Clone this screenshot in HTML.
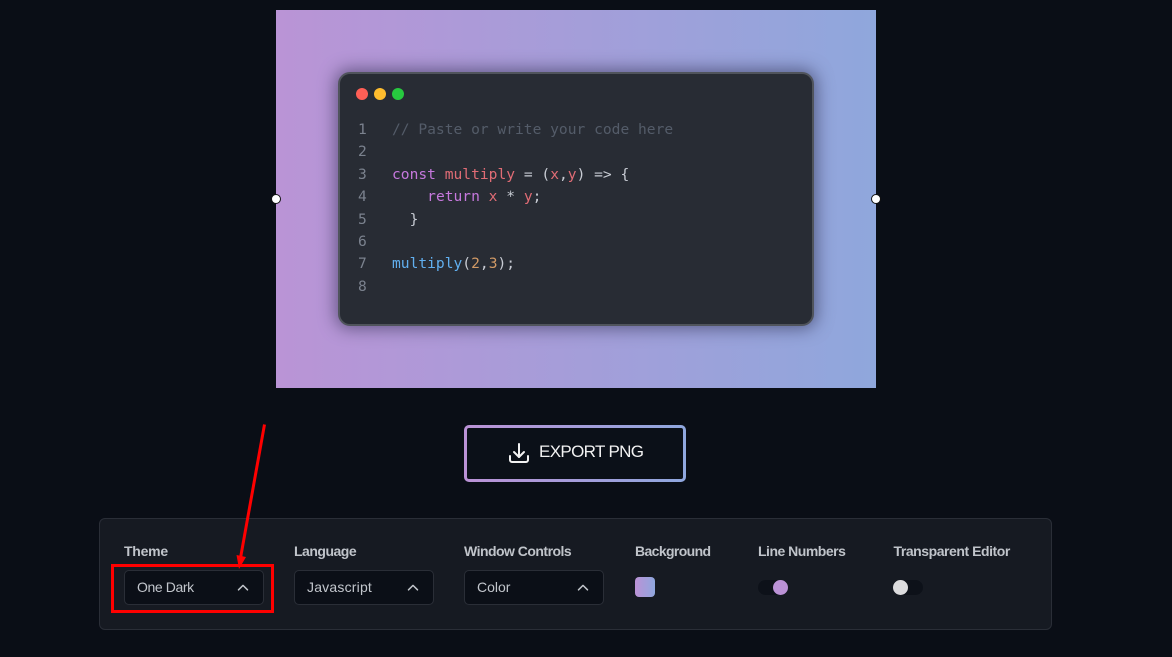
<!DOCTYPE html>
<html><head><meta charset="utf-8"><style>
html,body{margin:0;padding:0;background:#0a0e16;width:1172px;height:657px;overflow:hidden}
body{position:relative;font-family:"Liberation Sans",sans-serif}
.a{position:absolute}
.bg{left:276px;top:10px;width:600px;height:378px;background:linear-gradient(90deg,#ba94d6,#8fa7dc)}
.win{left:338px;top:72px;width:472px;height:250px;background:#282c34;border:2px solid #50545c;border-radius:12px;box-shadow:0 0 16px 3px rgba(30,30,60,.5)}
.d{width:12px;height:12px;border-radius:50%;top:88px}
.code{font-family:"DejaVu Sans Mono","Liberation Mono",monospace;font-size:14.6px;line-height:22.4px;white-space:pre;color:#c8ccd4}
.h{width:8px;height:8px;border-radius:50%;background:#fff;border:1px solid #111;top:194px}
.btn{left:464px;top:425px;width:222px;height:57px;box-sizing:border-box;border-radius:5px;border:3px solid transparent;background:linear-gradient(#0b1018,#0b1018) padding-box,linear-gradient(90deg,#bb92d6,#8fa7de) border-box}
.panel{left:99px;top:518px;width:951px;height:110px;background:#161a22;border:1px solid #2a2e37;border-radius:6px}
.l{top:543px;font-size:14px;line-height:16px;font-weight:bold;color:#c0c4ca;white-space:nowrap}
.s{top:570px;width:138px;height:33px;background:#0b0f17;border:1px solid #2a2e37;border-radius:5px}
.t{top:579px;font-size:14px;line-height:16px;color:#c2c6cc;white-space:nowrap}
.c{width:12px;height:7px;top:584px}
.tr{width:30px;height:15px;top:580px;background:#0d1119;border-radius:8px}
.k{width:15px;height:15px;border-radius:50%;top:580px}
</style></head><body>
<div class="a bg"></div>
<div class="a win"></div>
<div class="a d" style="left:356px;background:#ff5f56"></div>
<div class="a d" style="left:374px;background:#ffbd2e"></div>
<div class="a d" style="left:392px;background:#27c93f"></div>
<div class="a code" style="left:358px;top:119px;color:#7b828e">1
2
3
4
5
6
7
8</div>
<div class="a code" style="left:392px;top:119px"><span style="color:#545c69">// Paste or write your code here</span>

<span style="color:#c678dd">const</span> <span style="color:#e06c75">multiply</span> = (<span style="color:#e06c75">x</span>,<span style="color:#e06c75">y</span>) =&gt; <span>{</span>
    <span style="color:#c678dd">return</span> <span style="color:#e06c75">x</span> * <span style="color:#e06c75">y</span>;
  <span>}</span>

<span style="color:#61afef">multiply</span>(<span style="color:#d19a66">2</span>,<span style="color:#d19a66">3</span>);</div>
<div class="a h" style="left:271px"></div>
<div class="a h" style="left:871px"></div>
<div class="a btn"></div>
<svg class="a" style="left:507px;top:441px" width="24" height="24" viewBox="0 0 24 24" fill="none" stroke="#f2f2f2" stroke-width="2" stroke-linecap="round" stroke-linejoin="round"><path d="M3 15v4a2 2 0 0 0 2 2h14a2 2 0 0 0 2-2v-4"/><path d="M7 11l5 5 5-5"/><path d="M12 16V3"/></svg>
<div class="a" style="left:539px;top:443px;font-size:17px;line-height:18px;color:#f2f2f2;white-space:nowrap;letter-spacing:-.65px">EXPORT PNG</div>
<div class="a panel"></div>
<div class="a l" style="left:124px;letter-spacing:-.25px">Theme</div>
<div class="a l" style="left:294px;letter-spacing:-.5px">Language</div>
<div class="a l" style="left:464px;letter-spacing:-.52px">Window Controls</div>
<div class="a l" style="left:635px;letter-spacing:-.62px">Background</div>
<div class="a l" style="left:758px;letter-spacing:-.5px">Line Numbers</div>
<div class="a l" style="left:893.500px;letter-spacing:-.45px">Transparent Editor</div>
<div class="a s" style="left:124px"></div>
<div class="a s" style="left:294px"></div>
<div class="a s" style="left:464px"></div>
<div class="a t" style="left:137px;letter-spacing:-.4px">One Dark</div>
<div class="a t" style="left:307px;letter-spacing:.2px">Javascript</div>
<div class="a t" style="left:477px">Color</div>
<svg class="a c" style="left:237px" viewBox="0 0 12 7" fill="none" stroke="#c2c6cc" stroke-width="1.5" stroke-linecap="round" stroke-linejoin="round"><path d="M1.5 5.800L6 1.400l4.500 4.400"/></svg>
<svg class="a c" style="left:407px" viewBox="0 0 12 7" fill="none" stroke="#c2c6cc" stroke-width="1.5" stroke-linecap="round" stroke-linejoin="round"><path d="M1.500 5.800L6 1.400l4.500 4.400"/></svg>
<svg class="a c" style="left:577px" viewBox="0 0 12 7" fill="none" stroke="#c2c6cc" stroke-width="1.5" stroke-linecap="round" stroke-linejoin="round"><path d="M1.500 5.800L6 1.400l4.500 4.400"/></svg>
<div class="a" style="left:635px;top:577px;width:20px;height:20px;border-radius:4px;background:linear-gradient(90deg,#bb92d6,#8fa7de)"></div>
<div class="a tr" style="left:758px"></div>
<div class="a k" style="left:773px;background:#bb92d6"></div>
<div class="a tr" style="left:893px"></div>
<div class="a k" style="left:893px;background:#dcdcde"></div>
<svg class="a" style="left:0;top:0" width="1172" height="657" fill="none">
<rect x="112.500" y="565.500" width="160" height="46" stroke="#f00" stroke-width="3"/>
<path d="M264.500 424.500L240.500 558" stroke="#f00" stroke-width="3"/>
<path d="M236.500 555L246 557L239 569Z" fill="#f00"/>
</svg>
</body></html>
